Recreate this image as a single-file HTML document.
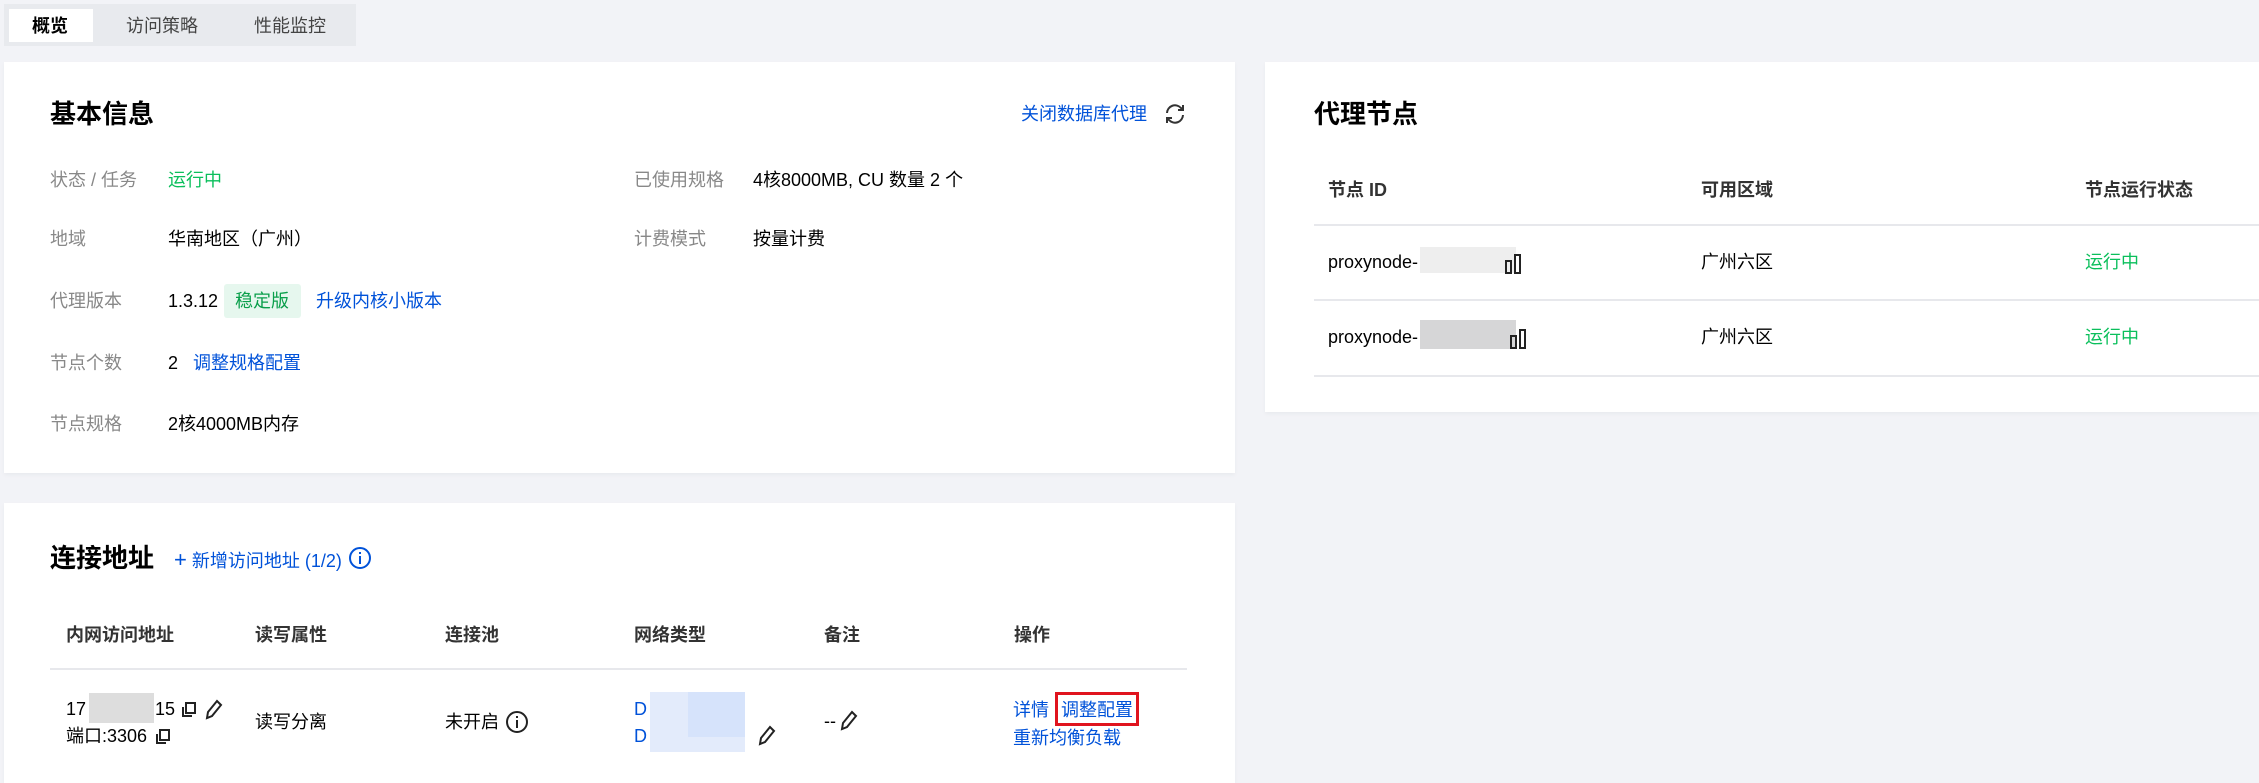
<!DOCTYPE html>
<html><head><meta charset="utf-8"><style>
*{margin:0;padding:0;box-sizing:border-box}
body{width:2259px;height:774px;background:#f2f3f7;font-family:"Liberation Sans","Noto Sans CJK SC",sans-serif;font-size:18px;color:#000;position:relative;overflow:hidden}
.a{position:absolute;white-space:nowrap;line-height:1}
.card{position:absolute;background:#fff;box-shadow:0 2px 4px rgba(0,0,0,0.04)}
.lb{color:#888}
.bl{color:#0052d9}
.gr{color:#0abf5b}
.t{font-size:26px;font-weight:bold}
.h{font-weight:bold;color:#333}
.ln{position:absolute;height:2px;background:#e7e8ec}
.blur{position:absolute}
</style></head><body>
<div class="a" style="left:4px;top:4px;width:352px;height:42px;background:#e8eaee"></div>
<div class="a" style="left:9px;top:9px;width:84px;height:33px;background:#fff"></div>
<div class="a" style="left:32px;top:17px;font-weight:bold">概览</div>
<div class="a" style="left:126px;top:17px;color:#444">访问策略</div>
<div class="a" style="left:254px;top:17px;color:#444">性能监控</div>

<div class="card" style="left:4px;top:62px;width:1231px;height:411px"></div>
<div class="a t" style="left:50px;top:101px">基本信息</div>
<div class="a bl" style="left:1021px;top:105px">关闭数据库代理</div>
<svg class="a" style="left:1163px;top:102px" width="24" height="24" viewBox="0 0 24 24" fill="none" stroke="#333" stroke-width="2"><path d="M4 11a8 8 0 0 1 14-5l2 2M20 13a8 8 0 0 1-14 5l-2-2"/><path d="M20 3v5h-5M4 21v-5h5"/></svg>

<div class="a lb" style="left:50px;top:171px">状态 / 任务</div><div class="a gr" style="left:168px;top:171px">运行中</div>
<div class="a lb" style="left:634px;top:171px">已使用规格</div><div class="a" style="left:753px;top:171px">4核8000MB, CU 数量 2 个</div>
<div class="a lb" style="left:50px;top:230px">地域</div><div class="a" style="left:168px;top:230px">华南地区（广州）</div>
<div class="a lb" style="left:634px;top:230px">计费模式</div><div class="a" style="left:753px;top:230px">按量计费</div>
<div class="a lb" style="left:50px;top:292px">代理版本</div><div class="a" style="left:168px;top:292px">1.3.12</div>
<div class="a" style="left:224px;top:284px;width:77px;height:34px;background:#e6f7ee;border-radius:3px"></div>
<div class="a" style="left:235px;top:292px;color:#0a9f4b">稳定版</div>
<div class="a bl" style="left:316px;top:292px">升级内核小版本</div>
<div class="a lb" style="left:50px;top:354px">节点个数</div><div class="a" style="left:168px;top:354px">2</div><div class="a bl" style="left:193px;top:354px">调整规格配置</div>
<div class="a lb" style="left:50px;top:415px">节点规格</div><div class="a" style="left:168px;top:415px">2核4000MB内存</div>

<div class="card" style="left:1265px;top:62px;width:994px;height:350px"></div>
<div class="a t" style="left:1314px;top:101px">代理节点</div>
<div class="a h" style="left:1328px;top:181px">节点 ID</div>
<div class="a h" style="left:1701px;top:181px">可用区域</div>
<div class="a h" style="left:2085px;top:181px">节点运行状态</div>
<div class="ln" style="left:1314px;top:224px;width:945px"></div>
<div class="a" style="left:1328px;top:253px">proxynode-</div>
<div class="blur" style="left:1420px;top:247px;width:96px;height:26px;background:#eee"></div>
<svg class="a" style="left:1505px;top:254px" width="18" height="20"><rect x="1" y="7" width="5" height="12" fill="none" stroke="#222" stroke-width="2"/><rect x="10" y="1" width="5" height="18" fill="none" stroke="#222" stroke-width="2"/></svg>
<div class="a" style="left:1701px;top:253px">广州六区</div>
<div class="a gr" style="left:2085px;top:253px">运行中</div>
<div class="ln" style="left:1314px;top:299px;width:945px"></div>
<div class="a" style="left:1328px;top:328px">proxynode-</div>
<div class="blur" style="left:1420px;top:320px;width:96px;height:29px;background:#d6d6d7"></div>
<svg class="a" style="left:1510px;top:329px" width="18" height="20"><rect x="1" y="7" width="5" height="12" fill="none" stroke="#222" stroke-width="2"/><rect x="10" y="1" width="5" height="18" fill="none" stroke="#222" stroke-width="2"/></svg>
<div class="a" style="left:1701px;top:328px">广州六区</div>
<div class="a gr" style="left:2085px;top:328px">运行中</div>
<div class="ln" style="left:1314px;top:375px;width:945px"></div>

<div class="card" style="left:4px;top:503px;width:1231px;height:280px"></div>
<div class="a t" style="left:50px;top:545px">连接地址</div>
<div class="a bl" style="left:174px;top:549px"><span style="font-size:22px">+</span> 新增访问地址 (1/2)</div>
<svg class="a" style="left:348px;top:546px" width="24" height="24"><circle cx="12" cy="12" r="10" fill="none" stroke="#0052d9" stroke-width="2"/><rect x="11" y="10" width="2" height="8" fill="#0052d9"/><rect x="11" y="6" width="2" height="2" fill="#0052d9"/></svg>
<div class="a h" style="left:66px;top:626px">内网访问地址</div>
<div class="a h" style="left:255px;top:626px">读写属性</div>
<div class="a h" style="left:445px;top:626px">连接池</div>
<div class="a h" style="left:634px;top:626px">网络类型</div>
<div class="a h" style="left:824px;top:626px">备注</div>
<div class="a h" style="left:1014px;top:626px">操作</div>
<div class="ln" style="left:50px;top:668px;width:1137px"></div>
<div class="a" style="left:66px;top:700px">17</div>
<div class="blur" style="left:89px;top:693px;width:65px;height:30px;background:#ddd"></div>
<div class="a" style="left:155px;top:700px">15</div>
<svg class="a" style="left:181px;top:702px" width="16" height="16"><rect x="5" y="1" width="9" height="10" fill="none" stroke="#222" stroke-width="2"/><path d="M2 5v9h9" fill="none" stroke="#222" stroke-width="2"/></svg>
<svg class="a" style="left:203px;top:697px" width="20" height="24"><path d="M4 21l1-6L14 4l4 4-9 11z" fill="none" stroke="#222" stroke-width="2"/></svg>
<div class="a" style="left:66px;top:727px">端口:3306</div>
<svg class="a" style="left:155px;top:729px" width="16" height="16"><rect x="5" y="1" width="9" height="10" fill="none" stroke="#222" stroke-width="2"/><path d="M2 5v9h9" fill="none" stroke="#222" stroke-width="2"/></svg>
<div class="a" style="left:255px;top:713px">读写分离</div>
<div class="a" style="left:445px;top:713px">未开启</div>
<svg class="a" style="left:505px;top:710px" width="24" height="24"><circle cx="12" cy="12" r="10" fill="none" stroke="#222" stroke-width="2"/><rect x="11" y="10" width="2" height="8" fill="#222"/><rect x="11" y="6" width="2" height="2" fill="#222"/></svg>
<div class="a bl" style="left:634px;top:700px">D</div>
<div class="a bl" style="left:634px;top:727px">D</div>
<div class="blur" style="left:650px;top:692px;width:95px;height:60px;background:#e3ebfb"></div>
<div class="blur" style="left:688px;top:692px;width:57px;height:45px;background:#d6e3fb"></div>
<svg class="a" style="left:756px;top:723px" width="20" height="24"><path d="M4 21l1-6L14 4l4 4-9 11z" fill="none" stroke="#222" stroke-width="2"/></svg>
<div class="a" style="left:824px;top:712px">--</div>
<svg class="a" style="left:838px;top:708px" width="20" height="24"><path d="M4 21l1-6L14 4l4 4-9 11z" fill="none" stroke="#222" stroke-width="2"/></svg>
<div class="a bl" style="left:1013px;top:701px">详情</div>
<div class="a" style="left:1055px;top:692px;width:84px;height:34px;border:3px solid #e0141e"></div>
<div class="a bl" style="left:1061px;top:701px">调整配置</div>
<div class="a bl" style="left:1013px;top:729px">重新均衡负载</div>
</body></html>
